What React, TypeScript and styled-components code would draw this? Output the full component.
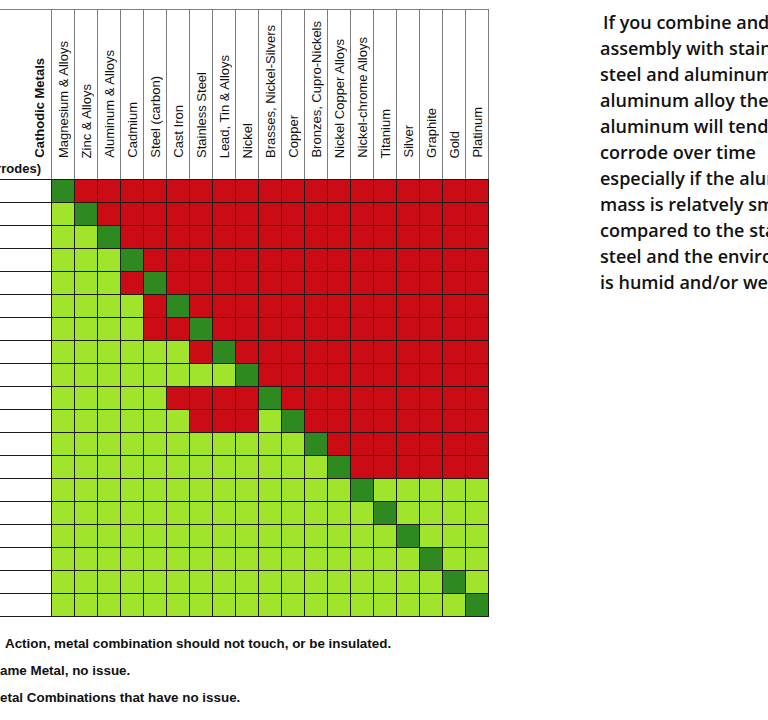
import React from "react";
import styled, { createGlobalStyle } from "styled-components";

const GlobalStyle = createGlobalStyle`
  html, body {
    margin: 0;
    padding: 0;
    background: #ffffff;
    overflow: hidden;
  }
  body {
    width: 768px;
    height: 720px;
  }
`;

const metals = [
  "Magnesium & Alloys",
  "Zinc & Alloys",
  "Aluminum & Alloys",
  "Cadmium",
  "Steel (carbon)",
  "Cast Iron",
  "Stainless Steel",
  "Lead, Tin & Alloys",
  "Nickel",
  "Brasses, Nickel-Silvers",
  "Copper",
  "Bronzes, Cupro-Nickels",
  "Nickel Copper Alloys",
  "Nickel-chrome Alloys",
  "Titanium",
  "Silver",
  "Graphite",
  "Gold",
  "Platinum",
];

type Kind = "bad" | "same" | "ok";

const extraBad = new Set([
  "4-3", "5-4", "6-4", "6-5", "7-6",
  "9-5", "9-6", "9-7", "9-8",
  "10-6", "10-7", "10-8",
]);

const kindOf = (r: number, c: number): Kind => {
  if (r === c) return "same";
  if (c > r) return r >= 13 ? "ok" : "bad";
  return extraBad.has(`${r}-${c}`) ? "bad" : "ok";
};

const colors: Record<Kind, string> = {
  bad: "#cc0c14",
  same: "#2e8a20",
  ok: "#a0e42c",
};

const Page = styled.div`
  display: flex;
  align-items: flex-start;
  padding-top: 9px;
`;

const Chart = styled.div`
  display: flex;
  flex-direction: column;
  width: 490px;
  flex: none;
`;

const HeaderGrid = styled.div`
  display: grid;
  grid-template-columns: 51px repeat(19, 22px);
  column-gap: 1px;
  width: max-content;
  background: #7d7d7d;
  border-top: 1px solid #7d7d7d;
  border-right: 1px solid #7d7d7d;
  height: 169px;
`;

const LabelHead = styled.div`
  background: #ffffff;
  display: flex;
  flex-direction: column;
  align-items: flex-end;
  justify-content: flex-end;
  padding: 0 4px 3px 0;
  font-family: "Liberation Sans", Arial, sans-serif;
  font-weight: 700;
  font-size: 13px;
  color: #111;
`;

const RotatedTitle = styled.span`
  writing-mode: vertical-rl;
  transform: rotate(180deg);
  white-space: nowrap;
  line-height: 14px;
`;

const SideTitle = styled.span`
  white-space: nowrap;
  margin: 3px 6px 0 0;
  line-height: 15px;
`;

const MetalHead = styled.div`
  background: #ffffff;
  display: flex;
  align-items: flex-end;
  justify-content: center;
  padding-bottom: 21px;
  font-family: "Liberation Sans", Arial, sans-serif;
  font-size: 13px;
  color: #111;
`;

const MetalName = styled.span`
  writing-mode: vertical-rl;
  transform: rotate(180deg);
  white-space: nowrap;
  line-height: 15px;
`;

const BodyGrid = styled.div`
  display: grid;
  grid-template-columns: 51px repeat(19, 22px);
  grid-auto-rows: 22px;
  gap: 1px;
  width: max-content;
  background: #1f1b18;
  padding: 1px 1px 1px 0;
`;

const RowLabel = styled.div`
  background: #ffffff;
`;

const Cell = styled.div<{ $kind: Kind }>`
  background: ${(p) => colors[p.$kind]};
`;

const Legend = styled.div`
  display: flex;
  flex-direction: column;
  margin-top: 13px;
  font-family: "Liberation Sans", Arial, sans-serif;
  font-weight: 700;
  font-size: 13.4px;
  line-height: 27px;
  color: #111;
`;

const LegendLine = styled.div<{ $indent: number }>`
  white-space: nowrap;
  padding-left: ${(p) => p.$indent}px;
`;

const Note = styled.div`
  margin-left: 110px;
  display: flex;
  flex-direction: column;
  font-family: "Open Sans", "Liberation Sans", sans-serif;
  font-weight: 600;
  font-size: 18px;
  line-height: 26px;
  color: #111;
`;

const NoteLine = styled.div<{ $indent?: number }>`
  white-space: nowrap;
  padding-left: ${(p) => p.$indent ?? 0}px;
`;

const noteLines = [
  "If you combine and an",
  "assembly with stainless",
  "steel and aluminum or",
  "aluminum alloy then the",
  "aluminum will tend to",
  "corrode over time",
  "especially if the aluminum",
  "mass is relatvely small",
  "compared to the stainless",
  "steel and the environment",
  "is humid and/or wet.",
];

export default function App() {
  return (
    <>
      <GlobalStyle />
      <Page>
        <Chart>
          <HeaderGrid>
            <LabelHead>
              <RotatedTitle>Cathodic Metals</RotatedTitle>
              <SideTitle>Anodic Metals (Corrodes)</SideTitle>
            </LabelHead>
            {metals.map((m) => (
              <MetalHead key={m}>
                <MetalName>{m}</MetalName>
              </MetalHead>
            ))}
          </HeaderGrid>
          <BodyGrid>
            {metals.map((m, r) => (
              <React.Fragment key={m}>
                <RowLabel />
                {metals.map((n, c) => (
                  <Cell key={n} $kind={kindOf(r, c)} />
                ))}
              </React.Fragment>
            ))}
          </BodyGrid>
          <Legend>
            <LegendLine $indent={5}>Action, metal combination should not touch, or be insulated.</LegendLine>
            <LegendLine $indent={0}>ame Metal, no issue.</LegendLine>
            <LegendLine $indent={0}>etal Combinations that have no issue.</LegendLine>
          </Legend>
        </Chart>
        <Note>
          {noteLines.map((l, i) => (
            <NoteLine key={l} $indent={i === 0 ? 3 : 0}>
              {l}
            </NoteLine>
          ))}
        </Note>
      </Page>
    </>
  );
}
